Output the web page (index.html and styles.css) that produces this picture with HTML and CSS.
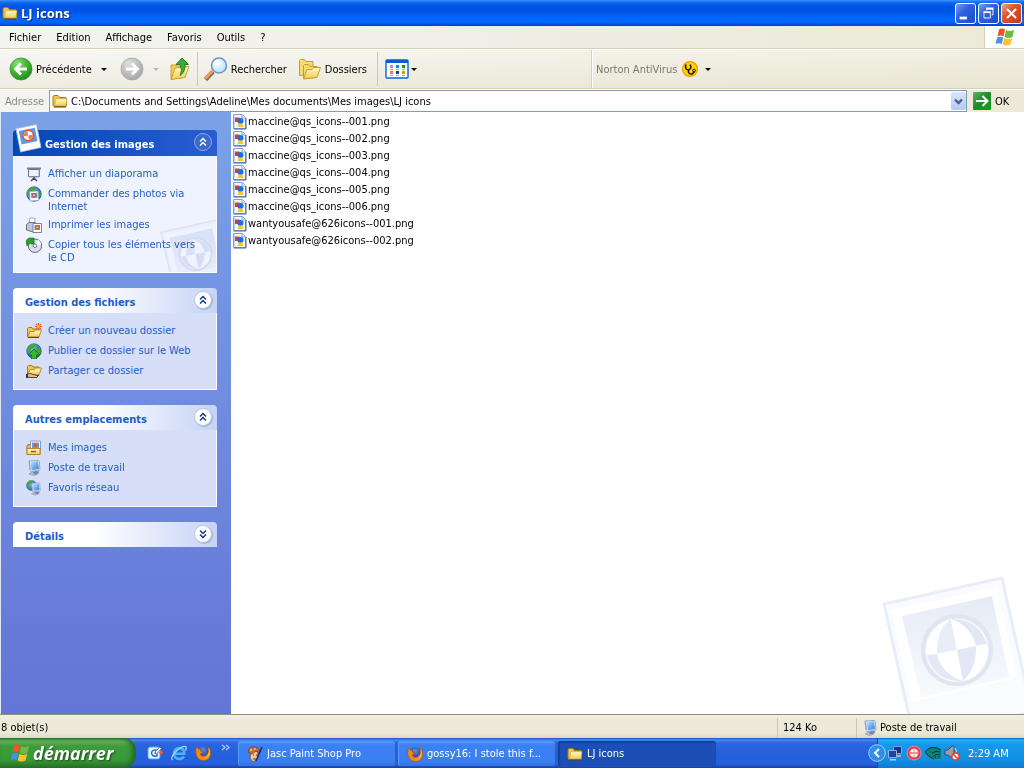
FILE: index.html
```html
<!DOCTYPE html>
<html lang="fr">
<head>
    <meta charset="UTF-8">
    <meta name="viewport" content="width=device-width, initial-scale=1.0">
    <title>LJ icons</title>
    <link rel="stylesheet" href="styles.css">
</head>
<body>
    <!-- shared icons -->
    <svg class="sprite" aria-hidden="true">
        <defs>
            <linearGradient id="gFolder" x1="0" y1="0" x2="0" y2="1">
                <stop offset="0" stop-color="#fffad0"/><stop offset="1" stop-color="#f3cc50"/>
            </linearGradient>
            <radialGradient id="gGreen" cx=".35" cy=".25" r=".85">
                <stop offset="0" stop-color="#8fe07c"/><stop offset=".5" stop-color="#3fb72f"/><stop offset="1" stop-color="#1d8419"/>
            </radialGradient>
            <linearGradient id="gGo" x1="0" y1="0" x2="1" y2="1">
                <stop offset="0" stop-color="#5fb065"/><stop offset=".5" stop-color="#23882c"/><stop offset="1" stop-color="#0fa018"/>
            </linearGradient>
            <radialGradient id="gGrey" cx=".35" cy=".25" r=".85">
                <stop offset="0" stop-color="#dedede"/><stop offset="1" stop-color="#a2a2a2"/>
            </radialGradient>
            <radialGradient id="gLens" cx=".4" cy=".35" r=".7">
                <stop offset="0" stop-color="#ffffff"/><stop offset="1" stop-color="#b4dcfa"/>
            </radialGradient>
            <radialGradient id="gGlobe" cx=".35" cy=".3" r=".8">
                <stop offset="0" stop-color="#7cc4f4"/><stop offset="1" stop-color="#124ba0"/>
            </radialGradient>
            <radialGradient id="gFox" cx=".5" cy=".3" r=".7">
                <stop offset="0" stop-color="#5a8ee0"/><stop offset="1" stop-color="#14307e"/>
            </radialGradient>
            <linearGradient id="gScreen" x1="0" y1="0" x2="1" y2="1">
                <stop offset="0" stop-color="#c4e6ff"/><stop offset="1" stop-color="#2a7be0"/>
            </linearGradient>
            <linearGradient id="gMark" x1="0" y1="0" x2="0" y2="1">
                <stop offset="0" stop-color="#e6ebf6"/><stop offset="1" stop-color="#f8faff"/>
            </linearGradient>
        </defs>

        <symbol id="folder" viewBox="0 0 16 16">
            <path d="M1 4q0-1.500 1.500-1.500h3.500L7.500 4.500H13q1.500 0 1.500 1.500v6.500q0 1-1 1H2.500q-1.500 0-1.500-1.500z" fill="#f0c94e" stroke="#a87a14"/>
            <path d="M2.500 13L3.500 6.500q.2-.8 1-.8H15l-1 7.300z" fill="url(#gFolder)" stroke="#c89a2c" stroke-width=".6"/>
            <path d="M2 14h12" stroke="#5d420c"/>
        </symbol>
        <symbol id="openfolder" viewBox="0 0 16 16">
            <path d="M1.500 14V5.500l1-1h3.500l1 1.500h6v3" fill="#f0c94e" stroke="#a87a14"/>
            <path d="M1.500 14L4 8.500h4.500l1-1.500H15.500L13 14z" fill="url(#gFolder)" stroke="#a87a14" stroke-width=".8"/>
            <path d="M2 14.500h11" stroke="#5d420c"/>
        </symbol>
        <symbol id="flag" viewBox="0 0 20 18">
            <path d="M4 1.500Q7-.5 10 1.500L8.500 8.500Q5.500 6.500 2.500 8.500z" fill="#f0532a"/>
            <path d="M11 2Q14 4 19 2L17.500 9Q13 11 9.500 9z" fill="#6fb944"/>
            <path d="M2.200 9.500Q5 7.800 8.200 9.500L6.700 16Q4 14.300.5 16z" fill="#4a8fe8"/>
            <path d="M9.200 10Q13 12 17.200 10L15.500 16.500Q12 18.500 7.700 16.500z" fill="#fcc12c"/>
        </symbol>
        <symbol id="pngfile" viewBox="0 0 16 16">
            <path d="M1.500.5H10.500L13.500 3.500V14.500H1.500z" fill="#f3f8ff" stroke="#7f9fdc"/>
            <path d="M2.500 1.500v12" stroke="#c2d5f5"/>
            <path d="M14 4v11H1.500" fill="none" stroke="#3f62a8"/>
            <path d="M10 .5V4H13.500" fill="#fff" stroke="#7f9fdc"/>
            <rect x="3" y="3.500" width="4.500" height="4.500" fill="#e83a1c"/>
            <circle cx="8.500" cy="7" r="3" fill="#1b6fe0"/>
            <path d="M6.500 9.500h4l1 3.500H5.500z" fill="#f8cc1e"/>
        </symbol>
        <symbol id="computer" viewBox="0 0 16 16">
            <path d="M3 14l4-3 6 .5-1 2.500-4 1.500z" fill="#b9bfcd" stroke="#8a93a8" stroke-width=".7"/>
            <path d="M6.500 13l3-2 3 1-2.500 2.500z" fill="#7680a0"/>
            <path d="M2.500 1.500L4 .5 5 10.500 3.500 9.500z" fill="#8fa5cc"/>
            <path d="M3.500 1L12 .5q1 0 1.200 1L14 10 5.500 11.500q-1 0-1.200-1z" fill="#e3eaf6" stroke="#7f99c8" stroke-width=".8"/>
            <path d="M4.500 2L12 1.300 12.900 9 5.700 10.200z" fill="url(#gScreen)"/>
        </symbol>
        <symbol id="globe" viewBox="0 0 16 16">
            <circle cx="8" cy="8" r="7.300" fill="url(#gGlobe)" stroke="#1a4a7c" stroke-width=".6"/>
            <path d="M3 3q4-3 7-1l-2 3-3 1-1 3-3-2zM10 5l4 0 1 4-3 4-2-4zM4 10l3 1-1 3z" fill="#46a82e"/>
        </symbol>
        <symbol id="photo" viewBox="0 0 28 30">
            <path d="M2 6.500L22.500 2 27 25 6.500 29z" fill="#17407c" opacity=".45"/>
            <path d="M1 4.800L21.500.6 26 23.500 5.500 28z" fill="#fff" stroke="#aebfdc" stroke-width=".8"/>
            <path d="M3.800 7L19.800 3.800 22.500 17 6.500 20.400z" fill="#5b9bea"/>
            <circle cx="13.200" cy="11.500" r="6" fill="#e4502c"/>
            <circle cx="13.200" cy="11.500" r="4.600" fill="#fff"/>
            <path d="M13.200 11.500L12.300 7q-3.500 1-3.700 5.300zM13.200 11.500l.9 4.500q3.500-1 3.700-5.300z" fill="#ee7a58"/>
        </symbol>
        <symbol id="up" viewBox="0 0 12 12">
            <path d="M3 5.500L6 2.500 9 5.500M3 9.500L6 6.500 9 9.500" fill="none" stroke="currentColor" stroke-width="1.500"/>
        </symbol>
        <symbol id="down" viewBox="0 0 12 12">
            <path d="M3 2.500L6 5.500 9 2.500M3 6.500L6 9.500 9 6.500" fill="none" stroke="currentColor" stroke-width="1.500"/>
        </symbol>
        <symbol id="firefox" viewBox="0 0 16 16">
            <circle cx="8" cy="7.500" r="6.500" fill="url(#gFox)"/>
            <path d="M1 3Q0 8 2 12q3 4 7 3.800Q15 15 15.800 9 16 4 13 1.500 14.500 6 12.500 9 10 12 7 11 5 10 5.500 8.500L8 7.500 5.500 6 5 3.500 3.500 4.500 2.500 2z" fill="#f08a1c" stroke="#a84508" stroke-width=".5"/>
            <path d="M13.500 3Q15.500 6 14 10q-2 4-6 4 4-1 5-4 1.500-3 .5-7z" fill="#fbd44a"/>
        </symbol>
        <symbol id="watermark" viewBox="0 0 154 150">
            <path d="M14 40L132 14 162 148 44 174z" fill="#fafbfe" stroke="#e8edf7" stroke-width="3"/>
            <path d="M21 46L127 23 147 114 42 138z" fill="#fff"/>
            <path d="M32 52L122 32 139 113 51 134z" fill="url(#gMark)"/>
            <circle cx="87" cy="86" r="34" fill="none" stroke="#e0e5f0" stroke-width="4"/>
            <circle cx="87" cy="86" r="31" fill="#fdfeff"/>
            <!-- ball quarters, light and dark in turn -->
            <path d="M81 55Q66 65 67 90L57 91Q56 64 81 55z" fill="#fff"/>
            <path d="M81 55Q108 54 117 80L106 82Q101 62 81 55z" fill="#e3e8f4"/>
            <path d="M67 90Q72 110 93 117 64 118 57 91z" fill="#e3e8f4"/>
            <path d="M106 82Q107 104 93 117 118 110 117 80z" fill="#fff"/>
            <path d="M87 86L81 55Q66 65 67 90z" fill="#e8edf8"/>
            <path d="M87 86L81 55Q101 62 106 82z" fill="#fff"/>
            <path d="M87 86L93 117Q72 110 67 90z" fill="#fff"/>
            <path d="M87 86L93 117Q107 104 106 82z" fill="#e3e8f4"/>
        </symbol>
    </svg>

    <header class="titlebar">
        <svg class="icon"><use href="#folder"/></svg>
        <h1>LJ icons</h1>
        <div class="window-buttons">
            <button class="win-btn" aria-label="Réduire"><svg viewBox="0 0 21 21"><path d="M4 14h8v3H4z" fill="#fff"/></svg></button>
            <button class="win-btn" aria-label="Restaurer"><svg viewBox="0 0 21 21"><path d="M8.500 7V5.500h7V12H14M5.500 9.500h7v6h-7z" fill="none" stroke="#fff"/><path d="M8 5h8M5 9h8" stroke="#fff" stroke-width="2"/></svg></button>
            <button class="win-btn close" aria-label="Fermer"><svg viewBox="0 0 21 21"><path d="M5.500 5.500l10 10M15.500 5.500l-10 10" stroke="#fff" stroke-width="2.200"/></svg></button>
        </div>
    </header>

    <nav class="menubar">
        <button>Fichier</button>
        <button>Edition</button>
        <button>Affichage</button>
        <button>Favoris</button>
        <button>Outils</button>
        <button>?</button>
        <div class="brand"><svg viewBox="0 0 20 18"><use href="#flag"/></svg></div>
    </nav>

    <div class="toolbar">
        <div class="tools">
            <button class="tool">
                <svg class="big" viewBox="0 0 24 24"><circle cx="12" cy="12" r="11" fill="url(#gGreen)" stroke="#36933a" stroke-width=".8"/><path d="M18 12H7M12 6.500L6.500 12 12 17.500" fill="none" stroke="#fff" stroke-width="2.800"/></svg>
                Précédente
                <span class="caret"></span>
            </button>
            <button class="tool next" disabled aria-label="Suivante">
                <svg class="big" viewBox="0 0 24 24"><circle cx="12" cy="12" r="11" fill="url(#gGrey)" stroke="#a5a5a5" stroke-width=".8"/><path d="M6 12h11M12 6.500l5.500 5.500L12 17.500" fill="none" stroke="#fff" stroke-width="2.800"/></svg>
                <span class="caret"></span>
            </button>
            <button class="tool parent" aria-label="Dossier parent">
                <svg class="big" viewBox="0 0 24 24"><path d="M3 22V8h5l2 1h8v3l-4 9z" fill="#f3cc50" stroke="#c29220" stroke-width=".8"/><path d="M3 22.500L7 11l14-1.500-4 11z" fill="url(#gFolder)" stroke="#c29220" stroke-width=".8"/><path d="M8 7.500L14 1 20.500 7.500H17Q17.500 15 12 18.500q3-5 0-11z" fill="#37ad32" stroke="#14701b" stroke-width=".8"/></svg>
            </button>
            <span class="divider"></span>
            <button class="tool search">
                <svg class="big" viewBox="0 0 24 24"><path d="M1.500 22.500L9 14.500" stroke="#8b6040" stroke-width="4.600"/><path d="M1.500 21.500L8.500 14" stroke="#ef9d63" stroke-width="2.800"/><circle cx="15" cy="8.500" r="7.500" fill="url(#gLens)" stroke="#7295d2" stroke-width="1.600"/><path d="M10.500 7q1-3 4-3.500" stroke="#fff" stroke-width="1.500" fill="none"/></svg>
                Rechercher
            </button>
            <button class="tool folders">
                <svg class="big" viewBox="0 0 24 24"><path d="M1.500 18.500V3.500l1-1h4l1.500 2h7v4l-3 9z" fill="#f8dc70" stroke="#c99b26"/><path d="M5.500 21.500v-13l1-1h4l1.500 2h7v4l-3 7z" fill="#f8dc70" stroke="#c99b26"/><path d="M5.500 22L9 12.500h5l1.500-2h7L19 20.500z" fill="url(#gFolder)" stroke="#c99b26"/></svg>
                Dossiers
            </button>
            <span class="divider"></span>
            <button class="tool views" aria-label="Affichages">
                <svg class="big" viewBox="0 0 24 24"><rect x="1" y="3" width="22" height="18" rx="1" fill="#fff" stroke="#0a62d8" stroke-width="1.400"/><path d="M1 3h22v3H1z" fill="#0a5bd4"/><path d="M5 8h3v3H5z" fill="#9a96cf"/><path d="M11 8h3v3h-3z" fill="#1586ef"/><path d="M17 8h3v3h-3z" fill="#119b16"/><path d="M5 14h3v3H5z" fill="#ff7648"/><path d="M11 14h3v3h-3z" fill="#123b9e"/><path d="M17 14h3v3h-3z" fill="#d19d00"/><path d="M5 12.500h3m3 0h3m3 0h3M5 18.500h3m3 0h3m3 0h3" stroke="#a9a9a9"/></svg>
                <span class="caret"></span>
            </button>
        </div>
        <div class="norton">
            Norton AntiVirus
            <button class="tool" aria-label="Norton AntiVirus">
                <svg class="icon" viewBox="0 0 16 16"><circle cx="8" cy="8" r="7.400" fill="#ffd600" stroke="#f39a00" stroke-width="1.200"/><path d="M4 3.500L3.500 6q.5 3 3 3 2.500-1 2.500-3L8 3.500M6.500 9v2.500q1 2 3.500 1.500l2.500-2.500" fill="none" stroke="#1b1200" stroke-width="1.500"/><circle cx="12" cy="9.500" r="1.400" fill="none" stroke="#1b1200"/></svg>
                <span class="caret"></span>
            </button>
        </div>
    </div>

    <form class="address">
        <label for="path">Adresse</label>
        <div class="address-box">
            <svg class="icon"><use href="#folder"/></svg>
            <input type="text" id="path" value="C:\Documents and Settings\Adeline\Mes documents\Mes images\LJ icons">
            <button type="button" class="drop" aria-label="Dérouler"><svg viewBox="0 0 15 17"><path d="M4 6.500l3.500 3.500L11 6.500" fill="none" stroke="#4d6185" stroke-width="2.400"/></svg></button>
        </div>
        <button type="button" class="go">
            <svg viewBox="0 0 18 18"><rect width="18" height="18" rx="1" fill="url(#gGo)"/><path d="M3 9h11M9.500 4l5 5-5 5" fill="none" stroke="#fff" stroke-width="2"/></svg>
            OK
        </button>
    </form>

    <main>
        <aside>
            <section class="panel primary">
                <header>
                    <svg class="panel-photo"><use href="#photo"/></svg>
                    <h2>Gestion des images</h2>
                    <button aria-label="Réduire"><svg><use href="#up"/></svg></button>
                </header>
                <ul>
                    <li>
                        <svg class="icon" viewBox="0 0 16 16"><path d="M1 1.500h14v2H1z" fill="#747a90"/><path d="M2.500 3.500h11v7h-11z" fill="#eef0fb" stroke="#6c7390"/><path d="M13 4v7H3" fill="none" stroke="#9aa0b8"/><path d="M8 11v2M5 15l3-3 3 3" fill="none" stroke="#444a5c" stroke-width="1.500"/></svg>
                        <a href="#">Afficher un diaporama</a>
                    </li>
                    <li>
                        <svg class="icon" viewBox="0 0 16 16"><use href="#globe"/><path d="M3.500 5.500L12 5l.8 9.500-8.800.5z" fill="#fff" stroke="#8899bb" stroke-width=".7"/><path d="M5 7l6-.3.400 5-6 .3z" fill="#4b8de0"/><circle cx="8" cy="9.300" r="2" fill="#e3563a"/><circle cx="8" cy="9.300" r=".8" fill="#fff"/></svg>
                        <a href="#">Commander des photos via Internet</a>
                    </li>
                    <li>
                        <svg class="icon" viewBox="0 0 16 16"><path d="M3 6L4 .8l5 .5L8.500 7z" fill="#fff" stroke="#8d95a8" stroke-width=".8"/><path d="M.5 7.500L3 5.500h6L12 8v6l-3 1.500L.5 13z" fill="#c0c6d4" stroke="#5f677c" stroke-width=".9"/><path d="M7 6.500h8.500v9H7z" fill="#fff" stroke="#5f6a88" stroke-width=".8"/><path d="M8.500 8h5.500v5H8.500z" fill="#4f92e5"/><circle cx="11.200" cy="10.500" r="1.900" fill="#e3563a"/><circle cx="11.200" cy="10.500" r=".7" fill="#fff"/></svg>
                        <a href="#">Imprimer les images</a>
                    </li>
                    <li>
                        <svg class="icon" viewBox="0 0 16 16"><circle cx="9" cy="8.700" r="6.700" fill="#dcdef0" stroke="#5c637c"/><path d="M9 8.700L12 3q3 1.500 3 5z" fill="#fff"/><circle cx="9" cy="8.700" r="1.800" fill="#fff" stroke="#5c637c" stroke-width=".9"/><path d="M0 3.500L3 1h5v6H5V5.500L1 9z" fill="#2ca02c" stroke="#12701a" stroke-width=".7"/></svg>
                        <a href="#">Copier tous les éléments vers le CD</a>
                    </li>
                </ul>
                <svg class="panel-mark" viewBox="10 12 120 112"><use href="#watermark" width="154" height="150"/></svg>
            </section>

            <section class="panel">
                <header>
                    <h2>Gestion des fichiers</h2>
                    <button aria-label="Réduire"><svg><use href="#up"/></svg></button>
                </header>
                <ul>
                    <li>
                        <svg class="icon" viewBox="0 0 16 16"><use href="#openfolder"/><path d="M12.500 0v7M9 3.500h7M10 1l5 5M15 1l-5 5" stroke="#f0622c" stroke-width="1.200"/><circle cx="12.500" cy="3.500" r="1.300" fill="#ffd84a"/></svg>
                        <a href="#">Créer un nouveau dossier</a>
                    </li>
                    <li>
                        <svg class="icon" viewBox="0 0 16 16"><use href="#globe"/><path d="M8 6l6 6h-3.500v4h-5v-4H2z" fill="#38b52d" stroke="#136c18" stroke-width=".8"/></svg>
                        <a href="#">Publier ce dossier sur le Web</a>
                    </li>
                    <li>
                        <svg class="icon" viewBox="0 0 16 16"><use href="#openfolder" y="-2"/><path d="M0 11.500l4-1 5 1.500 3 .5-1 2H5l-5-.5z" fill="#f0c08c" stroke="#4a331b" stroke-width=".9"/><path d="M0 11h2v4H0z" fill="#333"/></svg>
                        <a href="#">Partager ce dossier</a>
                    </li>
                </ul>
            </section>

            <section class="panel">
                <header>
                    <h2>Autres emplacements</h2>
                    <button aria-label="Réduire"><svg><use href="#up"/></svg></button>
                </header>
                <ul>
                    <li>
                        <svg class="icon" viewBox="0 0 16 16"><path d="M1 14.500V5.500l2-1h11v10z" fill="#eebd49" stroke="#a97612"/><path d="M4.500 1h10v9h-10z" fill="#fff" stroke="#7f93bd" stroke-width=".9"/><path d="M6 2.500h7v5.500H6z" fill="#5d9fe8"/><circle cx="9.500" cy="5.200" r="2" fill="#e4542e"/><path d="M1 8.500h13v6H1z" fill="url(#gFolder)" stroke="#b08020" stroke-width=".9"/><path d="M5 11.500h5" stroke="#8b6410" stroke-width="1.500"/></svg>
                        <a href="#">Mes images</a>
                    </li>
                    <li>
                        <svg class="icon"><use href="#computer"/></svg>
                        <a href="#">Poste de travail</a>
                    </li>
                    <li>
                        <svg class="icon" viewBox="0 0 16 16"><use href="#globe" width="11" height="11"/><use href="#computer" x="3" y="2" width="13" height="14"/></svg>
                        <a href="#">Favoris réseau</a>
                    </li>
                </ul>
            </section>

            <section class="panel closed">
                <header>
                    <h2>Détails</h2>
                    <button aria-label="Développer"><svg><use href="#down"/></svg></button>
                </header>
            </section>
        </aside>

        <div class="files">
            <ul>
                <li><svg class="icon"><use href="#pngfile"/></svg><a href="#">maccine@qs_icons--001.png</a></li>
                <li><svg class="icon"><use href="#pngfile"/></svg><a href="#">maccine@qs_icons--002.png</a></li>
                <li><svg class="icon"><use href="#pngfile"/></svg><a href="#">maccine@qs_icons--003.png</a></li>
                <li><svg class="icon"><use href="#pngfile"/></svg><a href="#">maccine@qs_icons--004.png</a></li>
                <li><svg class="icon"><use href="#pngfile"/></svg><a href="#">maccine@qs_icons--005.png</a></li>
                <li><svg class="icon"><use href="#pngfile"/></svg><a href="#">maccine@qs_icons--006.png</a></li>
                <li><svg class="icon"><use href="#pngfile"/></svg><a href="#">wantyousafe@626icons--001.png</a></li>
                <li><svg class="icon"><use href="#pngfile"/></svg><a href="#">wantyousafe@626icons--002.png</a></li>
            </ul>
            <svg class="watermark"><use href="#watermark"/></svg>
        </div>
    </main>

    <div class="statusbar">
        <span class="count">8 objet(s)</span>
        <span class="size">124 Ko</span>
        <span class="zone"><svg class="icon"><use href="#computer"/></svg>Poste de travail</span>
    </div>

    <footer class="taskbar">
        <button class="start"><svg viewBox="0 0 20 18"><use href="#flag"/></svg>démarrer</button>
        <div class="quick">
            <button aria-label="Bureau"><svg class="icon" viewBox="0 0 16 16"><rect x="1" y="2" width="12" height="12" rx="2" fill="#e9f4ff" stroke="#4ba3ec"/><path d="M10.500 5.500Q5 4 4.500 8q.5 4 5.500 3V8H7.500" fill="none" stroke="#1c6fd0" stroke-width="1.500"/><path d="M8 7l5-5 1.500 1.500L9.500 9z" fill="#fff" stroke="#345" stroke-width=".6"/><path d="M12 7.500h4M14 5.500v4" stroke="#f0642a" stroke-width="1.400"/></svg></button>
            <button aria-label="Internet Explorer"><svg class="icon" viewBox="0 0 16 16"><path d="M13 11.500Q11.500 14 8 14 3 13.500 3 8.500 3.500 3.200 8.300 3q5 .5 5 5.800H4.500" fill="none" stroke="#49b4f4" stroke-width="2.500"/><path d="M1.500 15Q-1 12.500 5 6.500 11 1 14.500 1.500q1.500 1 0 4" fill="none" stroke="#a6defc" stroke-width="1.200"/></svg></button>
            <button aria-label="Firefox"><svg class="icon"><use href="#firefox"/></svg></button>
            <button class="more" aria-label="Plus"><svg viewBox="0 0 9 8"><path d="M1 1l3 2.500L1 6M5 1l3 2.500L5 6" fill="none" stroke="#a9cbfb" stroke-width="1.300"/></svg></button>
        </div>
        <div class="tasks">
            <button><svg class="icon" viewBox="0 0 16 16"><path d="M4 6Q8 3 11 7l-1 6-4 3-3-4z" fill="#f3c7a0" stroke="#7a4020" stroke-width=".7"/><path d="M1 6Q2 0 8 1q5 1 5 6L9 5 5 8 3 7z" fill="#c96a38" stroke="#803514" stroke-width=".7"/><circle cx="4" cy="4" r="1" fill="#ffe080"/><circle cx="8" cy="3" r="1" fill="#90d0ff"/><path d="M15 1L9 15" stroke="#1a2d60" stroke-width="1.500"/><path d="M6 9h1m2 0h1M6 13h3" stroke="#6b2c18"/></svg><span>Jasc Paint Shop Pro</span></button>
            <button><svg class="icon"><use href="#firefox"/></svg><span>gossy16: I stole this f...</span></button>
            <button class="active"><svg class="icon"><use href="#folder"/></svg><span>LJ icons</span></button>
        </div>
        <div class="tray">
            <button class="expand" aria-label="Afficher les icônes cachées"><svg viewBox="0 0 18 18"><circle cx="9" cy="9" r="8.300" fill="#2d8fea" stroke="#9ad2fa"/><path d="M11 5L7 9l4 4" fill="none" stroke="#fff" stroke-width="2"/></svg></button>
            <svg class="icon" viewBox="0 0 16 16"><path d="M6.500 1.500h8v7h-8z" fill="#18308c" stroke="#8f9cc4"/><path d="M9 10h5v2H9z" fill="#a5adc7"/><path d="M1.500 5.500h8v7h-8z" fill="#22409c" stroke="#9dabd0"/><path d="M3 14h6v1.500H3z" fill="#c5cbdd"/></svg>
            <svg class="icon" viewBox="0 0 16 16"><circle cx="8" cy="8" r="7" fill="#e23b4a" stroke="#f08a92"/><circle cx="8" cy="8" r="4.500" fill="#f7c9cc"/><path d="M5 5h2v2h2V5h2v6H9V9H7v2H5z" fill="#fff"/><path d="M4 7.500h8v1H4z" fill="#d8283a"/></svg>
            <svg class="icon" viewBox="0 0 16 16"><path d="M0 7Q4 1 12 3l4 2v9H9Q3 13 0 7z" fill="#0a8378"/><path d="M0 7Q4 1 12 3l4 2M7 8q4-3 8-1M9 11q3-3 6-1M0 7q3 5 9 7" fill="none" stroke="#02312e"/><path d="M10 12h1m2 0h1" stroke="#02312e"/></svg>
            <svg class="icon" viewBox="0 0 16 16"><path d="M1 5h3l4-4 2 0v12H8L4 10H1z" fill="#9c9fa8" stroke="#444a58"/><path d="M11 3q3 3 0 7" stroke="#dfe6ee" fill="none"/><circle cx="11.500" cy="11.500" r="3.600" fill="#fff" stroke="#e03c24" stroke-width="1.500"/><path d="M9 9l5 5" stroke="#e03c24" stroke-width="1.500"/></svg>
            <time>2:29 AM</time>
        </div>
    </footer>
</body>
</html>
```
FILE: styles.css
```css
* {
    box-sizing: border-box;
}

body {
    margin: 0;
    height: 100vh;
    display: flex;
    flex-direction: column;
    overflow: hidden;
    background: #ece9d8;
    color: #000;
    font-family: "DejaVu Sans Condensed", "DejaVu Sans", sans-serif;
    font-size: 11px;
    line-height: 13px;
}

button,
input {
    font: inherit;
    color: inherit;
    margin: 0;
    padding: 0;
    border: none;
    background: none;
}

svg {
    display: block;
    flex: none;
}

ul {
    list-style: none;
    margin: 0;
    padding: 0;
}

a {
    color: inherit;
    text-decoration: none;
}

a:hover {
    text-decoration: underline;
}

.sprite {
    position: absolute;
    width: 0;
    height: 0;
}

.icon {
    width: 16px;
    height: 16px;
}

.caret {
    border: 3px solid transparent;
    border-top-color: #000;
    border-bottom: none;
}

/* title bar */
.titlebar {
    flex: none;
    display: flex;
    align-items: center;
    height: 26px;
    padding: 0 2px;
    background: linear-gradient(#3b93ff 0, #0a62ee 3px, #0054e3 7px, #0055e5 12px, #0066ff 18px, #0066ff 22px, #0040c8 26px);
}

.titlebar h1 {
    flex: 1;
    margin: 0 0 0 3px;
    color: #fff;
    font: bold 13px/20px "Open Sans", "Noto Sans", sans-serif;
    text-shadow: 1px 1px 1px #0a2a80;
}

.window-buttons {
    display: flex;
    gap: 2px;
}

.win-btn {
    width: 21px;
    height: 21px;
    border: 1px solid #fff;
    border-radius: 3px;
    background: linear-gradient(135deg, #7c9cf0, #2f62e0 40%, #1b4bd0);
}

.win-btn svg {
    width: 19px;
    height: 19px;
}

.win-btn.close {
    background: linear-gradient(135deg, #f0a288, #e0532e 40%, #c23a14);
}

/* menu bar */
.menubar {
    flex: none;
    display: flex;
    align-items: center;
    gap: 15px;
    height: 23px;
    padding-left: 9px;
    border-bottom: 1px solid #d6d0b4;
    background: linear-gradient(90deg, #f3f3f0, #ece9d8);
}

.brand {
    display: flex;
    align-items: center;
    justify-content: center;
    width: 40px;
    height: 22px;
    margin-left: auto;
    border-left: 1px solid #d6d0b4;
    background: #fff;
}

.brand svg {
    width: 20px;
    height: 18px;
}

/* toolbar */
.toolbar {
    flex: none;
    display: flex;
    height: 40px;
    border-top: 1px solid #fff;
    border-bottom: 1px solid #d6d0b4;
    background: linear-gradient(rgba(255, 255, 255, .3), rgba(225, 218, 185, .25)), linear-gradient(90deg, #f3f3f0, #ece9d8);
}

.tools {
    display: flex;
    align-items: center;
    width: 592px;
    padding-left: 9px;
    border-right: 1px solid #d6d0b4;
}

.tool {
    display: flex;
    align-items: center;
    gap: 3px;
}

.tool .caret {
    margin-left: 6px;
}

.big {
    width: 24px;
    height: 24px;
}

.next {
    margin-left: 13px;
}

.next .caret {
    border-top-color: #b8b8b0;
}

.parent {
    margin: 0 5px 0 9px;
}

.divider {
    width: 1px;
    height: 34px;
    background: #cdc7ac;
}

.search {
    margin-left: 6px;
}

.folders {
    margin: 0 10px 0 11px;
}

.views {
    gap: 0;
    margin-left: 7px;
}

.views .caret {
    margin-left: 2px;
}

.norton {
    display: flex;
    align-items: center;
    gap: 5px;
    padding-left: 3px;
    border-left: 1px solid #fff;
    color: #7b796c;
}

.norton .caret {
    margin-left: 4px;
}

/* address bar */
.address {
    flex: none;
    display: flex;
    align-items: center;
    height: 23px;
    padding-left: 5px;
    border-top: 1px solid #fff;
    background: linear-gradient(90deg, #f3f3f0, #ece9d8);
}

.address label {
    width: 44px;
    color: #8b897c;
}

.address-box {
    flex: 1;
    display: flex;
    align-items: center;
    height: 22px;
    padding: 0 0 0 2px;
    border: 1px solid #7f9db9;
    background: #fff;
}

.address-box input {
    flex: 1;
    margin-left: 3px;
    outline: none;
}

.drop {
    width: 15px;
    height: 18px;
    border-radius: 2px;
    background: linear-gradient(#dbe5fe, #b4c8f6);
}

.go {
    display: flex;
    align-items: center;
    gap: 4px;
    width: 57px;
    padding-left: 6px;
}

.go svg {
    width: 18px;
    height: 18px;
}

/* side panels */
main {
    flex: 1;
    display: flex;
    min-height: 0;
    border-left: 1px solid #dfe6f5;
    background: #fff;
}

aside {
    display: flex;
    flex-direction: column;
    gap: 15px;
    width: 230px;
    padding: 18px 14px 0 12px;
    background: linear-gradient(#7ba2e7, #6375d6);
}

.panel {
    position: relative;
    color: #215dc6;
}

.panel header {
    display: flex;
    align-items: center;
    height: 25px;
    padding: 0 5px 0 12px;
    border-radius: 4px 4px 0 0;
    background: linear-gradient(90deg, #fff 40%, #c6d3f7);
}

.panel h2 {
    flex: 1;
    margin: 3px 0 0;
    font-size: 11px;
    line-height: 13px;
}

.panel header button {
    display: flex;
    align-items: center;
    justify-content: center;
    width: 18px;
    height: 18px;
    margin-bottom: 2px;
    border: 1px solid #b9c6e6;
    border-radius: 50%;
    background: #fff;
    color: #10388f;
    box-shadow: 1px 1px 1px #9fb0d6;
}

.panel header svg {
    width: 12px;
    height: 12px;
}

.panel ul {
    display: flex;
    flex-direction: column;
    gap: 4px;
    padding: 10px 10px 10px 12px;
    border: 1px solid #fff;
    border-top: none;
    background: #d6dff7;
}

.panel li {
    display: flex;
    gap: 6px;
}

.panel li a {
    padding-top: 1px;
}

.primary header {
    height: 26px;
    padding-left: 32px;
    background: linear-gradient(90deg, #0049b5, #2b5cd2);
    color: #fff;
}

.primary header button {
    border-color: #8ba8ec;
    background: #3a68cf;
    color: #fff;
    box-shadow: none;
}

.primary ul {
    padding-bottom: 8px;
    background: #eff3ff;
}

.panel .panel-photo {
    position: absolute;
    left: 2px;
    top: -6px;
    width: 28px;
    height: 30px;
}

.panel-mark {
    position: absolute;
    right: 1px;
    bottom: 1px;
    width: 57px;
    height: 53px;
    mix-blend-mode: multiply;
    pointer-events: none;
}

/* file list */
.files {
    position: relative;
    flex: 1;
    overflow: hidden;
    padding: 1px 0 0 1px;
}

.files li {
    display: flex;
    align-items: center;
    height: 17px;
}

.watermark {
    position: absolute;
    right: 0;
    bottom: 0;
    width: 154px;
    height: 150px;
}

/* status bar */
.statusbar {
    flex: none;
    display: flex;
    align-items: center;
    height: 24px;
    padding-top: 2px;
    border-top: 1px solid #8f8d80;
    background: linear-gradient(#f3f1e6, #ece9d8 6px, #ece9d8 18px, #dcd8c2);
}

.statusbar span {
    display: flex;
    align-items: center;
    gap: 2px;
    height: 20px;
}

.count {
    flex: 1;
    padding-left: 1px;
}

.size {
    width: 79px;
    padding-left: 5px;
    border-left: 1px solid #cbc7b2;
}

.zone {
    width: 168px;
    padding-left: 5px;
    border-left: 1px solid #cbc7b2;
}

/* taskbar */
.taskbar {
    flex: none;
    display: flex;
    height: 30px;
    color: #fff;
    background: linear-gradient(#1f4fc0 0, #3f8cf3 2px, #2a66dd 5px, #245edb 20px, #2663e0 26px, #1941a5);
}

.start {
    display: flex;
    align-items: center;
    gap: 3px;
    width: 136px;
    padding-left: 10px;
    border-radius: 0 12px 12px 0;
    background: linear-gradient(#2f7a31 0, #5fb55d 3px, #3f9b3d 8px, #389838 22px, #2a7329);
    box-shadow: inset -4px 0 5px #23682a;
    font: italic bold 18px/24px "Open Sans", sans-serif;
    text-shadow: 1px 1px 2px #1c4a1c;
}

.start svg {
    width: 20px;
    height: 18px;
}

.quick {
    display: flex;
    align-items: center;
    gap: 8px;
    width: 102px;
    padding-left: 11px;
}

.quick .more {
    align-self: flex-start;
    margin: 6px 0 0 2px;
}

.more svg {
    width: 9px;
    height: 8px;
}

.tasks {
    flex: 1;
    display: flex;
    gap: 2px;
    padding: 3px 0 2px;
}

.tasks button {
    display: flex;
    align-items: center;
    gap: 4px;
    flex: 0 1 158px;
    min-width: 0;
    padding-left: 9px;
    border-radius: 3px;
    background: linear-gradient(#5c9bff, #3c81f3 4px, #3a7ff2 20px, #3473e0);
    box-shadow: inset 1px 0 #5d9bf8, inset -1px 0 #2b5fc8;
}

.tasks span {
    overflow: hidden;
    white-space: nowrap;
}

.tasks .active {
    background: #1c4fb5;
    box-shadow: inset 1px 1px 2px #0f3280;
}

.tray {
    display: flex;
    align-items: center;
    gap: 3px;
    width: 147px;
    background: linear-gradient(#0d64c4 0, #29b0f5 2px, #1598ea 6px, #118fe6 22px, #0f79cd);
    border-left: 1px solid #0f4ea8;
}

.expand {
    margin: 0 -2px 0 -10px;
}

.expand svg {
    width: 18px;
    height: 18px;
}

.tray time {
    margin-left: 5px;
    white-space: nowrap;
}
```
